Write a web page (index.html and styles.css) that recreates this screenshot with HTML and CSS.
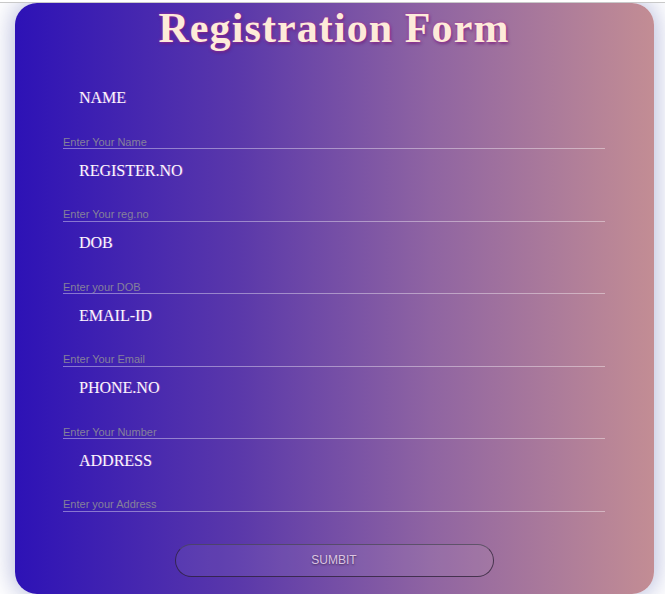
FILE: index.html
```html
<!DOCTYPE html>
<html lang="en">
<head>
<meta charset="utf-8">
<title>Registration Form</title>
<link rel="stylesheet" href="styles.css">
</head>
<body>
<form class="card">
  <h1 class="title">Registration Form</h1>
  <div class="fields">
    <div class="field">
      <label class="label" for="name">NAME</label>
      <input class="input" id="name" type="text" placeholder="Enter Your Name">
    </div>
    <div class="field">
      <label class="label" for="reg">REGISTER.NO</label>
      <input class="input" id="reg" type="text" placeholder="Enter Your reg.no">
    </div>
    <div class="field">
      <label class="label" for="dob">DOB</label>
      <input class="input" id="dob" type="text" placeholder="Enter your DOB">
    </div>
    <div class="field">
      <label class="label" for="email">EMAIL-ID</label>
      <input class="input" id="email" type="text" placeholder="Enter Your Email">
    </div>
    <div class="field">
      <label class="label" for="phone">PHONE.NO</label>
      <input class="input" id="phone" type="text" placeholder="Enter Your Number">
    </div>
    <div class="field">
      <label class="label" for="addr">ADDRESS</label>
      <input class="input" id="addr" type="text" placeholder="Enter your Address">
    </div>
  </div>
  <div class="actions">
    <button class="submit" type="button">SUMBIT</button>
  </div>
</form>
</body>
</html>
```

FILE: styles.css
```css
html, body {
  background: #ffffff;
}
body {
  margin: 2px 0 0 0;
  border-top: 1px solid #c9c9c9;
  font-family: "Liberation Serif", "Times New Roman", serif;
}
.card {
  box-sizing: border-box;
  width: 639px;
  height: 591px;
  margin: 0 0 0 15px;
  padding: 0 49px 0 48px;
  border-radius: 22px;
  background: linear-gradient(to right, #2d12b6 0%, #5a38aa 35%, #8f64a2 65%, #c38d94 100%);
  box-shadow: 0 0 24px 3px rgba(100, 108, 180, 0.45);
  display: flex;
  flex-direction: column;
}
.title {
  margin: 0;
  font-family: "Liberation Serif", "Times New Roman", serif;
  font-weight: bold;
  font-size: 42px;
  line-height: 50px;
  letter-spacing: 1.1px;
  text-align: center;
  color: #fdebd9;
  text-shadow: 0 0 3px #b52f9c, 1px 2px 3px rgba(90, 20, 110, 0.6);
}
.fields {
  margin-top: 35px;
  display: flex;
  flex-direction: column;
}
.field {
  display: flex;
  flex-direction: column;
  height: 72.5px;
}
.field:last-child {
  height: 61px;
}
.label {
  display: block;
  padding: 1px 0 0 16px;
  font-size: 16px;
  line-height: 18px;
  color: #fbf6ff;
  text-shadow: 1px 0 0 rgba(255, 150, 210, 0.3);
}
.input {
  margin-top: 26px;
  box-sizing: border-box;
  width: 100%;
  height: 16px;
  padding: 2px 0 0 0;
  border: none;
  border-bottom: 1px solid rgba(255, 255, 255, 0.4);
  background: transparent;
  font-family: "Liberation Sans", Arial, sans-serif;
  font-size: 11px;
  line-height: 13px;
  color: #ffffff;
  outline: none;
}
.input::placeholder {
  color: #85809a;
  opacity: 1;
}
.actions {
  margin-top: 32px;
  display: flex;
  justify-content: center;
}
.submit {
  box-sizing: border-box;
  width: 319px;
  height: 33px;
  border-radius: 17px;
  border: 1px solid rgba(40, 30, 50, 0.75);
  border-top-color: rgba(70, 70, 80, 0.7);
  background: rgba(255, 255, 255, 0.06);
  font-family: "Liberation Sans", Arial, sans-serif;
  font-size: 12px;
  color: #dcc6e2;
  text-shadow: 0 1px 2px rgba(40, 20, 60, 0.7);
  cursor: pointer;
}
```
